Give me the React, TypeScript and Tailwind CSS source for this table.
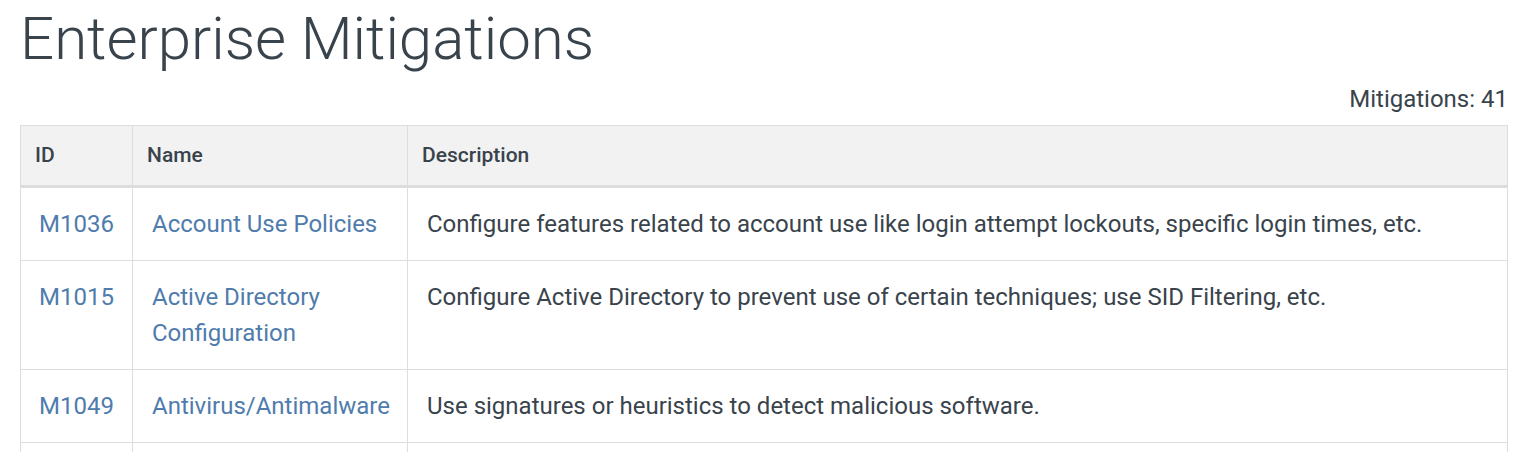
const rows = [
  {
    id: 'M1036',
    name: 'Account Use Policies',
    desc: 'Configure features related to account use like login attempt lockouts, specific login times, etc.',
  },
  {
    id: 'M1015',
    name: 'Active Directory Configuration',
    desc: 'Configure Active Directory to prevent use of certain techniques; use SID Filtering, etc.',
  },
  {
    id: 'M1049',
    name: 'Antivirus/Antimalware',
    desc: 'Use signatures or heuristics to detect malicious software.',
  },
  {
    id: 'M1013',
    name: 'Application Developer Guidance',
    desc: 'This mitigation describes any guidance or training given to developers of applications to avoid introducing security weaknesses that an adversary may be able to take advantage of.',
  },
];

export default function App() {
  return (
    <div className="bg-white pl-5 font-['Roboto',sans-serif] text-[#39434c]">
      <div className="w-[1488px]">
        <h1 className="pt-[3px] text-[60px] font-light leading-[72px]">Enterprise Mitigations</h1>
        <div className="mt-[8px] text-right text-[24px] leading-[32px]">Mitigations: 41</div>
        <table className="mt-[10px] w-full table-fixed border-collapse">
          <thead>
            <tr className="bg-[#f2f2f2]">
              <th className="w-[112px] border border-b-[3px] border-[#dddddd] px-[14px] py-4 text-left text-[21px] font-medium leading-[27px]">
                ID
              </th>
              <th className="w-[275px] border border-b-[3px] border-[#dddddd] px-[14px] py-4 text-left text-[21px] font-medium leading-[27px]">
                Name
              </th>
              <th className="border border-b-[3px] border-[#dddddd] px-[14px] py-4 text-left text-[21px] font-medium leading-[27px]">
                Description
              </th>
            </tr>
          </thead>
          <tbody>
            {rows.map((r) => (
              <tr key={r.id}>
                <td className="border border-[#dddddd] px-[18px] py-[18px] align-top text-[24px] leading-[36px]">
                  <a href="#" className="text-[#4f7cac]">
                    {r.id}
                  </a>
                </td>
                <td className="border border-[#dddddd] pl-[19px] pr-[12px] py-[18px] align-top text-[24px] leading-[36px]">
                  <a href="#" className="text-[#4f7cac]">
                    {r.name}
                  </a>
                </td>
                <td className="border border-[#dddddd] px-[19px] py-[18px] align-top text-[24px] leading-[36px]">
                  {r.desc}
                </td>
              </tr>
            ))}
          </tbody>
        </table>
      </div>
    </div>
  );
}
